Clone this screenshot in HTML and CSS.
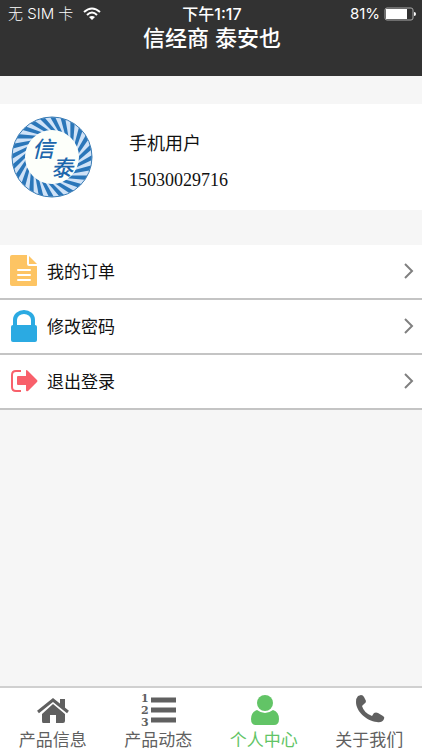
FILE: index.html
```html
<!DOCTYPE html>
<html lang="zh-CN">
  <head>
    <meta charset="utf-8" />
    <meta name="viewport" content="width=device-width, initial-scale=1" />
    <title>个人中心</title>
    <link rel="stylesheet" href="styles.css">
  </head>

  <body>
    <header>
      <div class="status">
        <div class="carrier">
          <span>无 SIM 卡</span>
          <svg width="18" height="14" viewBox="0 0 18 14" fill="none" stroke="#fff" stroke-width="2">
            <path d="M1 5Q9-2 17 5M4 8Q9 3 14 8" />
            <path d="M9 13L6 10Q9 8 12 10Z" fill="#fff" stroke="none" />
          </svg>
        </div>
        <time>下午1:17</time>
        <div class="power">
          <span>81%</span>
          <svg width="32" height="14" viewBox="0 0 32 14">
            <rect x="1" y="1" width="28" height="12" rx="2" fill="none" stroke="#aaa" />
            <path d="M2 2h21v10H2z" fill="#fff" />
            <path d="M30 5q2 0 2 2t-2 2z" fill="#fff" />
          </svg>
        </div>
      </div>
      <h1>信经商 泰安也</h1>
    </header>

    <main>
      <section class="profile">
        <svg class="logo" width="82" height="82" viewBox="-41 -41 82 82">
          <defs>
            <path id="s1" d="M-12-38L-7-39L4-26L0-26Z" />
            <g id="s3"><use href="#s1" /><use href="#s1" transform="rotate(15)" /><use href="#s1" transform="rotate(30)" /></g>
            <g id="s6"><use href="#s3" /><use href="#s3" transform="rotate(45)" /></g>
            <g id="s12"><use href="#s6" /><use href="#s6" transform="rotate(90)" /></g>
          </defs>
          <circle r="40" fill="#cfe2f7" />
          <g fill="#2a76b9"><use href="#s12" /><use href="#s12" transform="rotate(180)" /></g>
          <circle r="40" fill="none" stroke="#3a7cb5" />
          <circle r="27" fill="#fdfffa" />
          <text x="-20" y="0">信</text>
          <text x="-1" y="19">泰</text>
        </svg>
        <div class="user">
          <p>手机用户</p>
          <p class="phone">15030029716</p>
        </div>
      </section>

      <nav class="menu">
        <a href="#orders">
          <svg width="28" height="32" viewBox="0 0 28 32">
            <path d="M2 0h15v9q0 2 2 2h8v19q0 1-1 1H2q-2 0-2-2V2q0-2 2-2zM19 1l8 8h-8z" fill="#fdc463" />
            <path d="M8 15h12M8 20h12M8 25h12" stroke="#fff" stroke-width="2" stroke-linecap="round" />
          </svg>
          <span>我的订单</span>
          <svg class="arrow" width="10" height="16" viewBox="0 0 10 16"><path d="M1 1l7 7-7 7" /></svg>
        </a>
        <a href="#password">
          <svg width="28" height="32" viewBox="0 0 28 32">
            <path d="M5 16V10a9 8 0 0 1 18 0v6" fill="none" stroke="#2baae2" stroke-width="4" />
            <rect x="1" y="15" width="26" height="17" rx="2" fill="#2baae2" />
          </svg>
          <span>修改密码</span>
          <svg class="arrow" width="10" height="16" viewBox="0 0 10 16"><path d="M1 1l7 7-7 7" /></svg>
        </a>
        <a href="#logout">
          <svg width="28" height="32" viewBox="0 0 28 32">
            <path d="M11 6H6q-4 0-4 4v12q0 4 4 4h5" fill="none" stroke="#f8606b" stroke-width="2" />
            <path d="M8 11h8V6q0-2 2 0l9 9q1 1 0 2l-9 9q-2 1-2-1v-5H8q-1 0-1-1v-7q0-1 1-1z" fill="#f8606b" />
          </svg>
          <span>退出登录</span>
          <svg class="arrow" width="10" height="16" viewBox="0 0 10 16"><path d="M1 1l7 7-7 7" /></svg>
        </a>
      </nav>
    </main>

    <nav class="tabs">
      <a href="#info">
        <svg width="36" height="36" viewBox="0 0 36 36">
          <path d="M3 19L18 7l15 12" fill="none" stroke="currentColor" stroke-width="3" />
          <path d="M25 6h5v10l-5-4zM18 11l12 10v7q0 2-2 2h-7v-8h-6v8H8q-1 0-1-2v-7z" fill="currentColor" />
        </svg>
        <span>产品信息</span>
      </a>
      <a href="#news">
        <svg width="36" height="36" viewBox="0 0 36 36">
          <path d="M11 7h25M11 17h25M11 27h25" stroke="currentColor" stroke-width="5" />
          <g class="digits"><text x="1" y="9">1</text><text x="1" y="21">2</text><text x="1" y="33">3</text></g>
        </svg>
        <span>产品动态</span>
      </a>
      <a href="#me" class="active">
        <svg width="36" height="36" viewBox="0 0 36 36" fill="currentColor">
          <circle cx="19" cy="10" r="8" />
          <path d="M11 17q8 6 16 0 6 2 6 9 0 6-5 6H10q-5 0-5-6 0-7 6-9z" />
        </svg>
        <span>个人中心</span>
      </a>
      <a href="#about">
        <svg width="36" height="36" viewBox="0 0 36 36" fill="currentColor">
          <path d="M7 3l3-1q2 0 3 2l2 4q0 2-2 3l-2 2q2 7 10 10l2-3q2-1 4 0l5 3q2 1 1 3-2 4-7 3C15 28 5 18 5 9q0-4 2-6z" />
        </svg>
        <span>关于我们</span>
      </a>
    </nav>
  </body>
</html>
```
FILE: styles.css
```css
* {
    box-sizing: border-box;
}
body {
    margin: 0;
    min-height: 100vh;
    display: flex;
    flex-direction: column;
    background: #f6f6f6;
    color: #111;
    font-family: "Liberation Sans", "Noto Sans CJK SC", sans-serif;
}
a {
    color: inherit;
    text-decoration: none;
}
h1, p {
    margin: 0;
}
header {
    height: 76px;
    padding: 4px 6px 0 8px;
    background: #323232;
    color: #fff;
    text-align: center;
}
.status {
    display: grid;
    grid-template-columns: 1fr auto 1fr;
    font-family: Inter, "Noto Sans CJK SC", sans-serif;
    font-size: 15px;
    line-height: 20px;
}
.status time {
    font-size: 16px;
    font-weight: 500;
}
.carrier, .power {
    display: flex;
    align-items: center;
    gap: 10px;
}
.carrier {
    font-weight: 300;
}
.power {
    justify-content: flex-end;
    gap: 4px;
}
h1 {
    font-size: 22px;
    font-weight: 500;
    line-height: 30px;
}
main {
    flex: 1;
}
.profile {
    display: flex;
    align-items: center;
    gap: 36px;
    margin: 28px 0 35px;
    padding: 12px 11px;
    background: #fff;
}
.logo text {
    fill: #1c66ac;
    font-size: 22px;
    font-style: italic;
    font-weight: 500;
}
.user {
    padding-top: 10px;
    font-size: 18px;
    line-height: 36px;
}
.phone {
    font-family: "Liberation Serif", serif;
}
.menu a {
    display: flex;
    align-items: center;
    gap: 9px;
    height: 55px;
    padding: 0 8px 2px 10px;
    border-bottom: 2px solid #c4c4c4;
    background: #fff;
    font-size: 17px;
}
.arrow {
    margin-left: auto;
    fill: none;
    stroke: #808080;
    stroke-width: 2;
}
.tabs {
    display: grid;
    grid-template-columns: repeat(4, 1fr);
    height: 64px;
    padding-top: 5px;
    border-top: 2px solid #d0d0d0;
    background: #fff;
    color: #606060;
}
.tabs a {
    display: flex;
    flex-direction: column;
    align-items: center;
    font-size: 17px;
    line-height: 24px;
}
.tabs .active {
    color: #62c466;
}
.digits {
    fill: currentColor;
    font-family: "DejaVu Serif", serif;
    font-size: 11px;
    font-weight: bold;
}
```
